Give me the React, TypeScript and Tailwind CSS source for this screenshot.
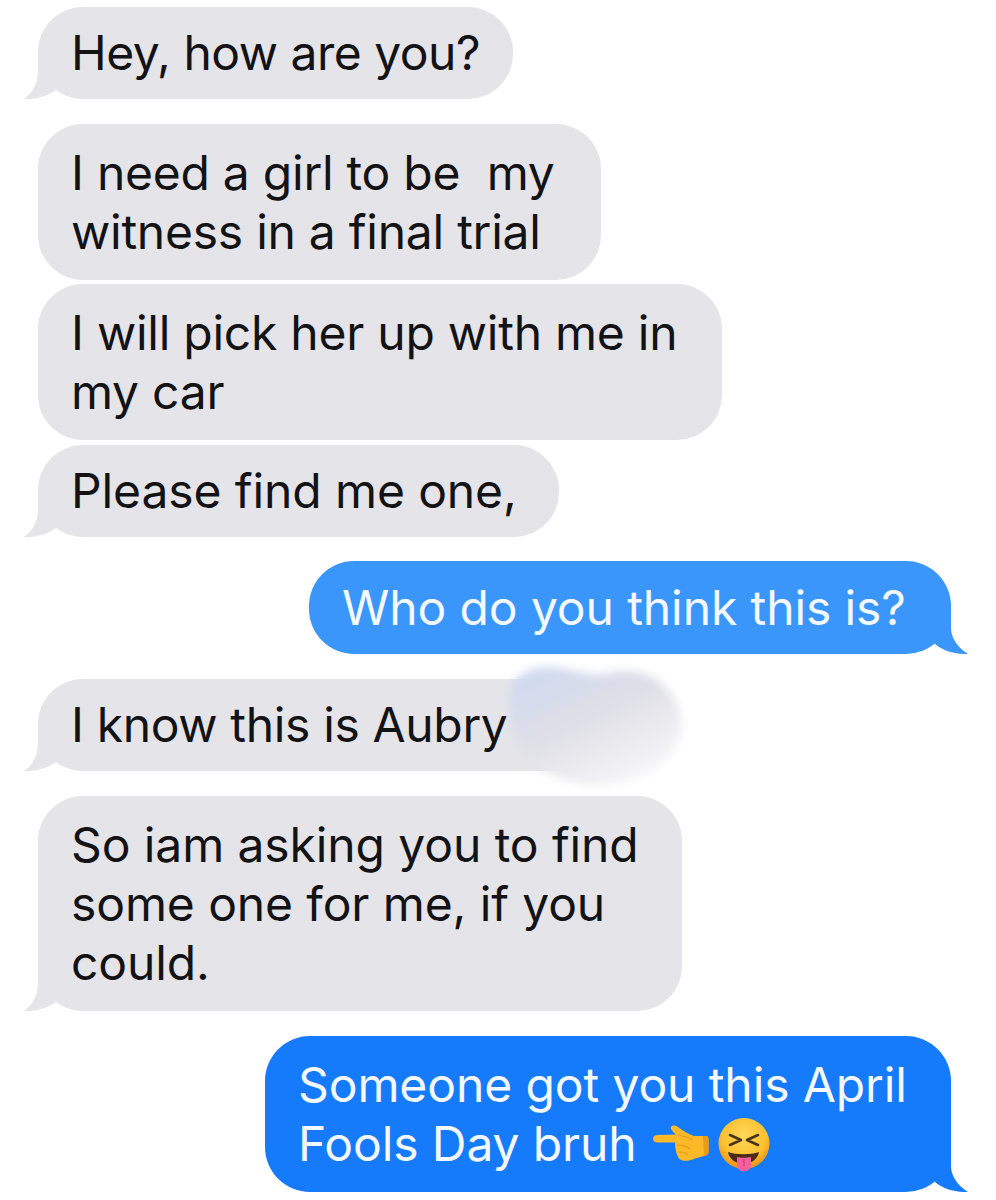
import React from "react";

function Tail({ side, color }: { side: "left" | "right"; color: string }) {
  if (side === "left") {
    return (
      <svg className="absolute bottom-0 left-[-14px]" width="34" height="50" viewBox="0 0 34 50">
        <path d="M14 0 L14 22 C14 34 9 44 0 50 C12 50.5 24 47 32 41 L32 0 Z" fill={color} />
      </svg>
    );
  }
  return (
    <svg className="absolute bottom-0 right-[-17px] -scale-x-100" width="34" height="50" viewBox="0 0 34 50">
      <path d="M17 0 L17 24 C17 34 10 44 0 50 C12 50.5 25 47 33 40 L33 0 Z" fill={color} />
    </svg>
  );
}

function Bubble({
  w,
  h,
  blue,
  tail,
  dark,
  mt,
  lines,
  trk,
  children,
}: {
  w: string;
  h: string;
  blue?: boolean;
  tail?: boolean;
  dark?: boolean;
  mt: string;
  lines: string[];
  trk?: string;
  children?: React.ReactNode;
}) {
  const color = blue ? (dark ? "#167bfb" : "#3a96fb") : "#e4e4e9";
  return (
    <div className={`relative ${w} ${h} ${mt} ${blue ? "self-end" : "self-start"} flex flex-col justify-center`}>
      <div
        className={`absolute inset-0 rounded-[45px] ${blue ? (dark ? "bg-[#167bfb]" : "bg-[#3a96fb]") : "bg-[#e4e4e9]"}`}
      />
      {tail && <Tail side={blue ? "right" : "left"} color={color} />}
      <div className={`relative pl-[33px] pb-[1px] ${blue ? "text-[#f4f8ff]" : "text-[#131316]"} whitespace-pre ${trk ?? ""}`}>
        {lines.map((l, i) => (
          <div key={i} className="h-[59px] leading-[59px]">
            {l}
            {i === lines.length - 1 && children}
          </div>
        ))}
      </div>
    </div>
  );
}

function Hand() {
  return (
    <svg className="inline-block align-[-1px] ml-[14px]" width="58" height="37" viewBox="0 0 58 37">
      <path
        d="M2 13.5 C2 11 4 10 7 10 L25 9.5 C22 7 19 4 20 2 C21 0 24 0 27 2 C31 5 37 9 43 11 L55 11 C57 11 57.5 13 57.5 15 L57.5 27 C57.5 30 55 30.5 53 31 C48 32 44 34 38 35.5 C33 36.5 29 35.5 27 32 C25 28 24 23 24 17.5 L7 17.5 C4 17.5 2 16 2 13.5 Z"
        fill="#fbb827"
      />
      <path d="M52 11 L55 11 C57 11 57.5 13 57.5 15 L57.5 27 C57.5 30 55 30.5 53 31 Z" fill="#e99a18" />
      <path d="M27 10 C33 11 38 13 42 15 M26 20 C31 20 36 21 39 24 M28 27 C32 27 35 28 37 30" stroke="#e39a1a" strokeWidth="1.2" fill="none" />
    </svg>
  );
}

function Face() {
  return (
    <svg className="inline-block align-[-11px] ml-[9px]" width="52" height="54" viewBox="0 0 52 54">
      <defs>
        <radialGradient id="faceFill" cx="50%" cy="35%" r="62%">
          <stop offset="0%" stopColor="#ffd95a" />
          <stop offset="70%" stopColor="#fdc02f" />
          <stop offset="100%" stopColor="#f1961a" />
        </radialGradient>
      </defs>
      <circle cx="26" cy="25.5" r="25.5" fill="url(#faceFill)" />
      <path d="M12 17 L23 22 L12 27 M40 17 L29 22 L40 27" stroke="#4a3418" strokeWidth="2.6" fill="none" strokeLinecap="round" strokeLinejoin="round" />
      <path d="M10 34 C18 37 33 37 41 34 C40 41 33 46 25.5 46 C18 46 11 41 10 34 Z" fill="#4a2a18" />
      <path d="M19 39 C22 40 29 40 33 39 L33 47 C33 55.5 19 55.5 19 47 Z" fill="#f3609c" />
      <path d="M26 41 L26 48" stroke="#cf3f7e" strokeWidth="1.3" />
    </svg>
  );
}

export default function App() {
  return (
    <div
      className="relative w-[996px] h-[1200px] overflow-hidden bg-white flex flex-col pl-[38px] pr-[45px] pt-[7px] text-[48px] tracking-[-0.1px]"
      style={{ fontFamily: 'Inter, "Liberation Sans", Arial, sans-serif' }}
    >
      <Bubble w="w-[475px]" h="h-[92px]" mt="mt-0" tail trk="tracking-[-0.5px]" lines={["Hey, how are you?"]} />
      <Bubble w="w-[563px]" h="h-[156px]" mt="mt-[25px]" trk="tracking-[-0.25px]" lines={["I need a girl to be  my", "witness in a final trial"]} />
      <Bubble w="w-[684px]" h="h-[156px]" mt="mt-[4px]" trk="tracking-[-0.25px]" lines={["I will pick her up with me in", "my car"]} />
      <Bubble w="w-[521px]" h="h-[92px]" mt="mt-[5px]" tail lines={["Please find me one,"]} />
      <Bubble w="w-[642px]" h="h-[93px]" mt="mt-[24px]" blue tail lines={["Who do you think this is?"]} />
      <Bubble w="w-[580px]" h="h-[92px]" mt="mt-[25px]" tail trk="tracking-[-0.35px]" lines={["I know this is Aubry"]} />
      <Bubble
        w="w-[644px]"
        h="h-[215px]"
        mt="mt-[25px]"
        tail
        lines={["So iam asking you to find", "some one for me, if you", "could."]}
      />
      <Bubble w="w-[686px]" h="h-[156px]" mt="mt-[25px]" blue dark tail lines={["Someone got you this April", "Fools Day bruh"]}>
        <Hand />
        <Face />
      </Bubble>

      <svg className="absolute left-[490px] top-[650px]" width="210" height="145" viewBox="0 0 210 145">
        <defs>
          <filter id="smear" x="-20%" y="-20%" width="140%" height="140%">
            <feGaussianBlur stdDeviation="5" />
          </filter>
          <linearGradient id="smearFill" x1="0" y1="0" x2="0.7" y2="1">
            <stop offset="0%" stopColor="#cbd9f2" />
            <stop offset="50%" stopColor="#dfdfe6" />
            <stop offset="100%" stopColor="#f7f7fa" />
          </linearGradient>
        </defs>
        <path
          d="M20 50 C18 24 44 14 70 18 C88 21 100 26 116 24 C136 18 160 20 178 40 C194 58 194 84 182 102 C168 122 136 136 106 135 C84 134 68 128 54 120 C30 110 22 84 20 50 Z"
          fill="url(#smearFill)"
          filter="url(#smear)"
        />
      </svg>
    </div>
  );
}
